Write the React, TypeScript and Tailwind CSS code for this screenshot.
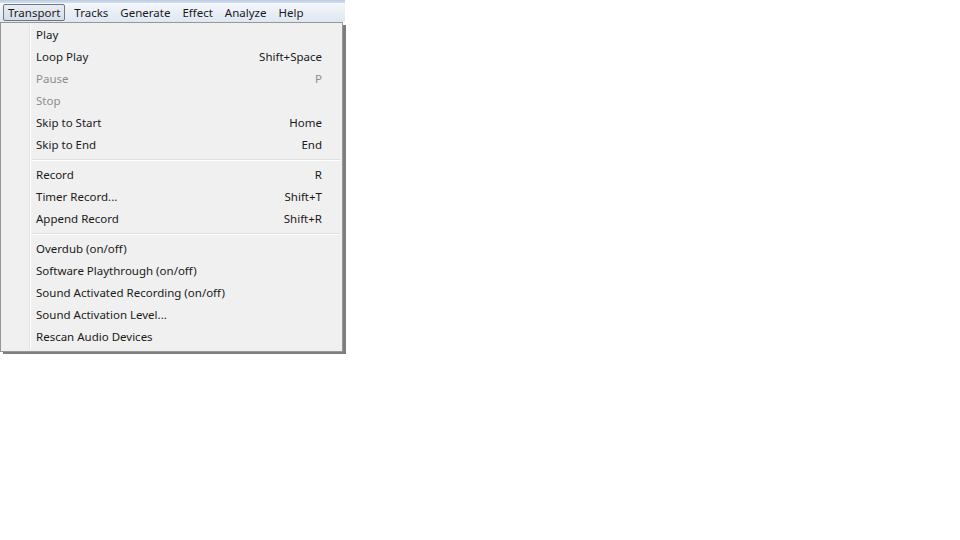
import React from 'react'

type Item = { label: string; key?: string; disabled?: boolean } | 'sep'

const items: Item[] = [
  { label: 'Play' },
  { label: 'Loop Play', key: 'Shift+Space' },
  { label: 'Pause', key: 'P', disabled: true },
  { label: 'Stop', disabled: true },
  { label: 'Skip to Start', key: 'Home' },
  { label: 'Skip to End', key: 'End' },
  'sep',
  { label: 'Record', key: 'R' },
  { label: 'Timer Record...', key: 'Shift+T' },
  { label: 'Append Record', key: 'Shift+R' },
  'sep',
  { label: 'Overdub (on/off)' },
  { label: 'Software Playthrough (on/off)' },
  { label: 'Sound Activated Recording (on/off)' },
  { label: 'Sound Activation Level...' },
  { label: 'Rescan Audio Devices' },
]

const menus = ['Transport', 'Tracks', 'Generate', 'Effect', 'Analyze', 'Help']

export default function App() {
  return (
    <div
      className="relative w-[960px] h-[540px] bg-white overflow-hidden text-[11.5px] text-[#1a1a1a]"
      style={{ fontFamily: '"Segoe UI", "Noto Sans", "Open Sans", sans-serif' }}
    >
      {/* window top strip + menu bar */}
      <div className="w-[345px] h-[3px] bg-gradient-to-b from-[#b9cbe3] to-[#d4e0ef]" />
      <div className="w-[345px] h-[19px] bg-gradient-to-b from-[#f4f7fb] to-[#dfe7f2] flex items-center pl-[3px]">
        {menus.map((m, i) => (
          <div
            key={m}
            className={
              i === 0
                ? 'h-[17px] px-[4px] mr-[3px] flex items-center rounded-[2px] border border-[#6f7880] bg-gradient-to-b from-[#e9edf2] to-[#d6dde6] leading-none'
                : 'h-[17px] px-[6px] flex items-center leading-none'
            }
          >
            {m}
          </div>
        ))}
      </div>

      {/* dropdown */}
      <div className="absolute left-0 top-[22px] w-[346px] h-[332px]">
        <div className="absolute left-[3px] top-[3px] w-[343px] h-[329px] bg-[#5e5e5e] opacity-80" />
        <div className="relative w-[343px] h-[330px] border border-[#979797] bg-[#f0f0f0] pt-[1px]">
          <div className="absolute left-[28px] top-[2px] bottom-[2px] w-[2px] border-l border-[#e2e3e3] bg-white" />
          {items.map((it, i) =>
            it === 'sep' ? (
              <div key={i} className="relative ml-[31px] mr-[2px] h-[8px] flex flex-col justify-center">
                <div className="h-px bg-[#e0e0e0]" />
                <div className="h-px bg-white" />
              </div>
            ) : (
              <div
                key={i}
                className={`relative h-[22px] flex items-center pl-[35px] pr-[20px] justify-between ${
                  it.disabled ? 'text-[#8d8d8d]' : ''
                }`}
              >
                <span>{it.label}</span>
                {it.key && <span>{it.key}</span>}
              </div>
            )
          )}
        </div>
      </div>
    </div>
  )
}
